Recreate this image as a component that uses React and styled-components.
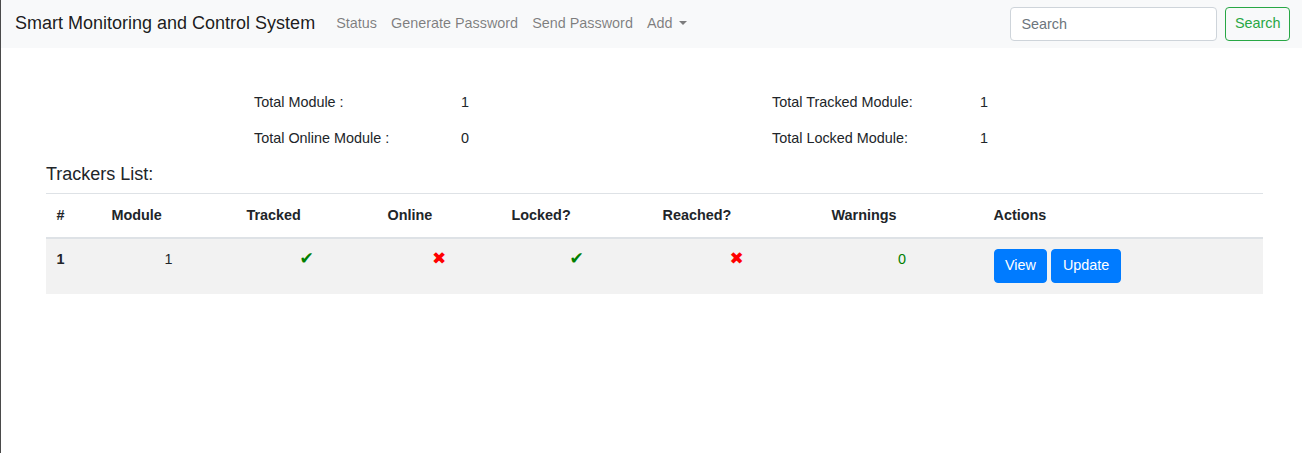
import React from 'react';
import styled, { createGlobalStyle } from 'styled-components';

const GlobalStyle = createGlobalStyle`
  body {
    margin: 0;
    font-family: "Liberation Sans", Arial, sans-serif;
    font-size: 14.4px;
    line-height: 1.5;
    color: #212529;
    background: #ffffff;
  }
  * {
    box-sizing: border-box;
  }
`;

const Page = styled.div`
  min-height: 100vh;
  border-left: 1px solid #4a4a4a;
`;

const Navbar = styled.nav`
  display: flex;
  align-items: center;
  height: 48px;
  padding: 0 12px 1px 14px;
  background: #f8f9fa;
`;

const Brand = styled.a`
  font-size: 18px;
  margin-right: 14px;
  color: rgba(0, 0, 0, 0.9);
  white-space: nowrap;
`;

const NavLinks = styled.div`
  display: flex;
  align-items: center;
  flex: 1;
`;

const NavLink = styled.a`
  padding: 0 7px;
  color: rgba(0, 0, 0, 0.5);
  white-space: nowrap;
  display: flex;
  align-items: center;

  &::after {
    content: ${(p) => (p.$dropdown ? '""' : 'none')};
    display: inline-block;
    margin-left: 0.45em;
    border-top: 0.3em solid;
    border-right: 0.3em solid transparent;
    border-left: 0.3em solid transparent;
  }
`;

const SearchForm = styled.form`
  display: flex;
  align-items: center;
  gap: 8px;
`;

const SearchInput = styled.input`
  width: 207px;
  height: 34px;
  padding: 0 10px;
  font: inherit;
  color: #495057;
  border: 1px solid #ced4da;
  border-radius: 4px;
  background: #fff;

  &::placeholder {
    color: #6c757d;
  }
`;

const OutlineButton = styled.button`
  height: 34px;
  padding: 0 8.5px;
  font: inherit;
  color: #28a745;
  background: transparent;
  border: 1px solid #28a745;
  border-radius: 4px;
`;

const Main = styled.main`
  padding: 37px 39px 0 45px;
`;

const Stats = styled.div`
  display: grid;
  grid-template-columns: 518px 518px;
  padding-left: 208px;
`;

const Stat = styled.div`
  display: flex;
  height: 36px;
  align-items: center;
`;

const StatLabel = styled.span`
  width: ${(p) => p.$width}px;
`;

const Heading = styled.h5`
  margin: 7px 0 7px;
  font-size: 18px;
  font-weight: 400;
  line-height: 1.2;
`;

const Table = styled.table`
  width: 100%;
  border-collapse: collapse;
`;

const Th = styled.th`
  text-align: left;
  font-weight: 700;
  padding: 11px 10.5px 10.5px;
  border-top: 1px solid #dee2e6;
  border-bottom: 2px solid #dee2e6;
  width: ${(p) => p.$width}px;
`;

const Row = styled.tr`
  background: #f2f2f2;
`;

const Td = styled.td`
  padding: 10.5px;
  vertical-align: top;
  text-align: ${(p) => (p.$left ? 'left' : 'center')};
  font-weight: ${(p) => (p.$bold ? 700 : 400)};
  color: ${(p) => p.$color || 'inherit'};
`;

const Mark = styled.span`
  font-family: "DejaVu Sans", sans-serif;
  font-size: 17px;
  line-height: 1;
  color: ${(p) => (p.$ok ? '#008000' : '#ff0000')};
`;

const ActionButton = styled.button`
  height: 34px;
  padding: 0 10.5px;
  margin-right: 4px;
  font: inherit;
  color: #fff;
  background: #007bff;
  border: 1px solid #007bff;
  border-radius: 4px;
`;

const columns = [
  ['#', 55],
  ['Module', 135],
  ['Tracked', 141],
  ['Online', 124],
  ['Locked?', 151],
  ['Reached?', 169],
  ['Warnings', 162],
  ['Actions', undefined],
];

const stats = [
  ['Total Module :', '1', 207],
  ['Total Tracked Module:', '1', 208],
  ['Total Online Module :', '0', 207],
  ['Total Locked Module:', '1', 208],
];

const Check = ({ ok }) => <Mark $ok={ok}>{ok ? '\u2714' : '\u2716'}</Mark>;

export default function App() {
  return (
    <Page>
      <GlobalStyle />
      <Navbar>
        <Brand>Smart Monitoring and Control System</Brand>
        <NavLinks>
          <NavLink>Status</NavLink>
          <NavLink>Generate Password</NavLink>
          <NavLink>Send Password</NavLink>
          <NavLink $dropdown>Add</NavLink>
        </NavLinks>
        <SearchForm onSubmit={(e) => e.preventDefault()}>
          <SearchInput placeholder="Search" />
          <OutlineButton type="submit">Search</OutlineButton>
        </SearchForm>
      </Navbar>
      <Main>
        <Stats>
          {stats.map(([label, value, w]) => (
            <Stat key={label}>
              <StatLabel $width={w}>{label}</StatLabel>
              <span>{value}</span>
            </Stat>
          ))}
        </Stats>
        <Heading>Trackers List:</Heading>
        <Table>
          <thead>
            <tr>
              {columns.map(([name, w]) => (
                <Th key={name} $width={w}>{name}</Th>
              ))}
            </tr>
          </thead>
          <tbody>
            <Row>
              <Td $left $bold>1</Td>
              <Td>1</Td>
              <Td><Check ok /></Td>
              <Td><Check /></Td>
              <Td><Check ok /></Td>
              <Td><Check /></Td>
              <Td $color="#008000">0</Td>
              <Td $left>
                <ActionButton>View</ActionButton>
                <ActionButton>Update</ActionButton>
              </Td>
            </Row>
          </tbody>
        </Table>
      </Main>
    </Page>
  );
}
